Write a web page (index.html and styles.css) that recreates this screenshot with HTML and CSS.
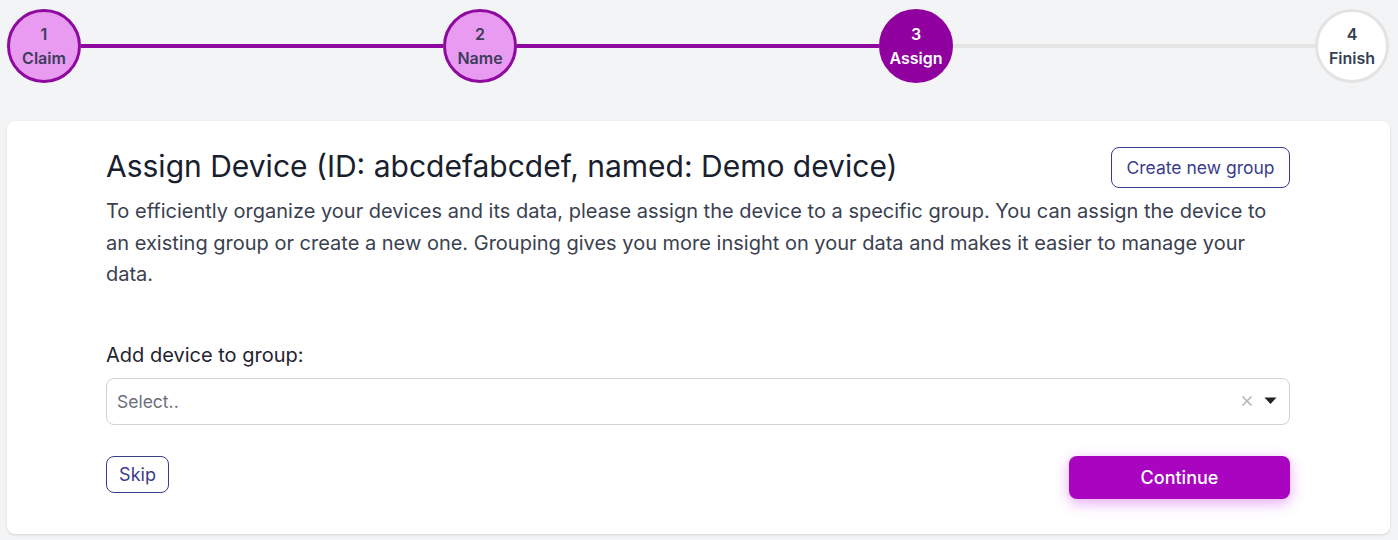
FILE: index.html
```html
<!DOCTYPE html>
<html lang="en">
<head>
<meta charset="utf-8">
<title>Assign Device</title>
<link rel="stylesheet" href="styles.css">
</head>
<body>
<div class="stepper">
  <div class="step done"><span class="num">1</span><span class="lbl">Claim</span></div>
  <div class="bar on"></div>
  <div class="step done"><span class="num">2</span><span class="lbl">Name</span></div>
  <div class="bar on"></div>
  <div class="step active"><span class="num">3</span><span class="lbl">Assign</span></div>
  <div class="bar"></div>
  <div class="step todo"><span class="num">4</span><span class="lbl">Finish</span></div>
</div>

<div class="card">
  <div class="inner">
    <div class="head">
      <h1 class="title">Assign Device (ID: abcdefabcdef, named: Demo device)</h1>
      <button class="btn-outline btn-create">Create new group</button>
    </div>
    <p class="desc">To efficiently organize your devices and its data, please assign the device to a specific group. You can assign the device to an existing group or create a new one. Grouping gives you more insight on your data and makes it easier to manage your data.</p>

    <label class="field-label">Add device to group:</label>
    <div class="select">
      <span class="placeholder">Select..</span>
      <span class="icons">
        <svg class="clear" width="12" height="12" viewBox="0 0 12 12"><path d="M1.5 1.5 L10.5 10.5 M10.5 1.5 L1.5 10.5" stroke="#b3b3b3" stroke-width="1.5" fill="none"/></svg>
        <svg class="caret" width="13" height="8" viewBox="0 0 13 8"><path d="M0.5 0.5 H12.5 L6.5 7 Z" fill="#222"/></svg>
      </span>
    </div>

    <div class="actions">
      <button class="btn-outline btn-skip">Skip</button>
      <button class="btn-primary">Continue</button>
    </div>
  </div>
</div>
</body>
</html>
```

FILE: styles.css
```css
* { box-sizing: border-box; }
html, body { margin: 0; padding: 0; }
body {
  background: #f3f4f6;
  font-family: Inter, "Noto Sans", "Liberation Sans", sans-serif;
  color: #1f2937;
  width: 1398px;
  height: 540px;
  overflow: hidden;
}

.stepper {
  display: flex;
  align-items: center;
  padding: 9px 9px 0 7px;
}
.step {
  width: 74px;
  height: 74px;
  border-radius: 50%;
  border: 3px solid #8e0a9e;
  display: flex;
  flex-direction: column;
  align-items: center;
  justify-content: center;
  flex: none;
  font-weight: 600;
  font-size: 16px;
  line-height: 24px;
  color: #3c3d5c;
}
.step .num { margin-top: -1px; }
.step.done { background: #e89bf0; }
.step.active { background: #8f009f; border-color: #8f009f; color: #fff; }
.step.todo { background: #fff; border-color: #e3e3e3; color: #333f52; }
.bar {
  flex: 1;
  height: 4px;
  background: #e5e5e5;
}
.bar.on { background: #8e0a9e; }

.card {
  margin: 38px 8px 0 7px;
  background: #fff;
  border-radius: 8px;
  box-shadow: 0 1px 3px rgba(0,0,0,0.12);
  padding: 26px 1px 35px 0;
}
.inner {
  width: 1184px;
  margin: 0 auto;
}
.head {
  display: flex;
  align-items: center;
  justify-content: space-between;
}
.title {
  margin: 0;
  padding-bottom: 3px;
  font-size: 30px;
  font-weight: 400;
  line-height: 36px;
  color: #18202e;
}
.btn-outline {
  font-family: inherit;
  background: #fff;
  border: 1px solid #3a3c8c;
  color: #3a3c8c;
  border-radius: 8px;
  cursor: pointer;
}
.btn-create {
  height: 41px;
  width: 179px;
  font-size: 17.5px;
  padding: 0;
}
.desc {
  margin: 8px 0 0;
  font-size: 20px;
  line-height: 31.5px;
  color: #3a4150;
}
.field-label {
  display: block;
  margin-top: 50px;
  font-size: 20px;
  line-height: 28px;
  color: #1f2430;
}
.select {
  margin-top: 9px;
  height: 47px;
  border: 1px solid #d1d1d6;
  border-radius: 8px;
  display: flex;
  align-items: center;
  justify-content: space-between;
  padding: 0 12px 0 10px;
}
.placeholder {
  font-size: 17.5px;
  color: #6b6f7b;
}
.icons {
  display: flex;
  align-items: center;
  gap: 11px;
}
.actions {
  margin-top: 31px;
  display: flex;
  justify-content: space-between;
  align-items: flex-start;
}
.btn-skip {
  height: 37px;
  width: 63px;
  font-size: 18px;
  padding: 0;
}
.btn-primary {
  font-family: inherit;
  height: 43px;
  width: 221px;
  border: none;
  border-radius: 8px;
  background: #a905c0;
  color: #fff;
  font-size: 18px;
  font-weight: 500;
  box-shadow: 0 4px 14px rgba(205, 60, 235, 0.45);
  cursor: pointer;
}
```
